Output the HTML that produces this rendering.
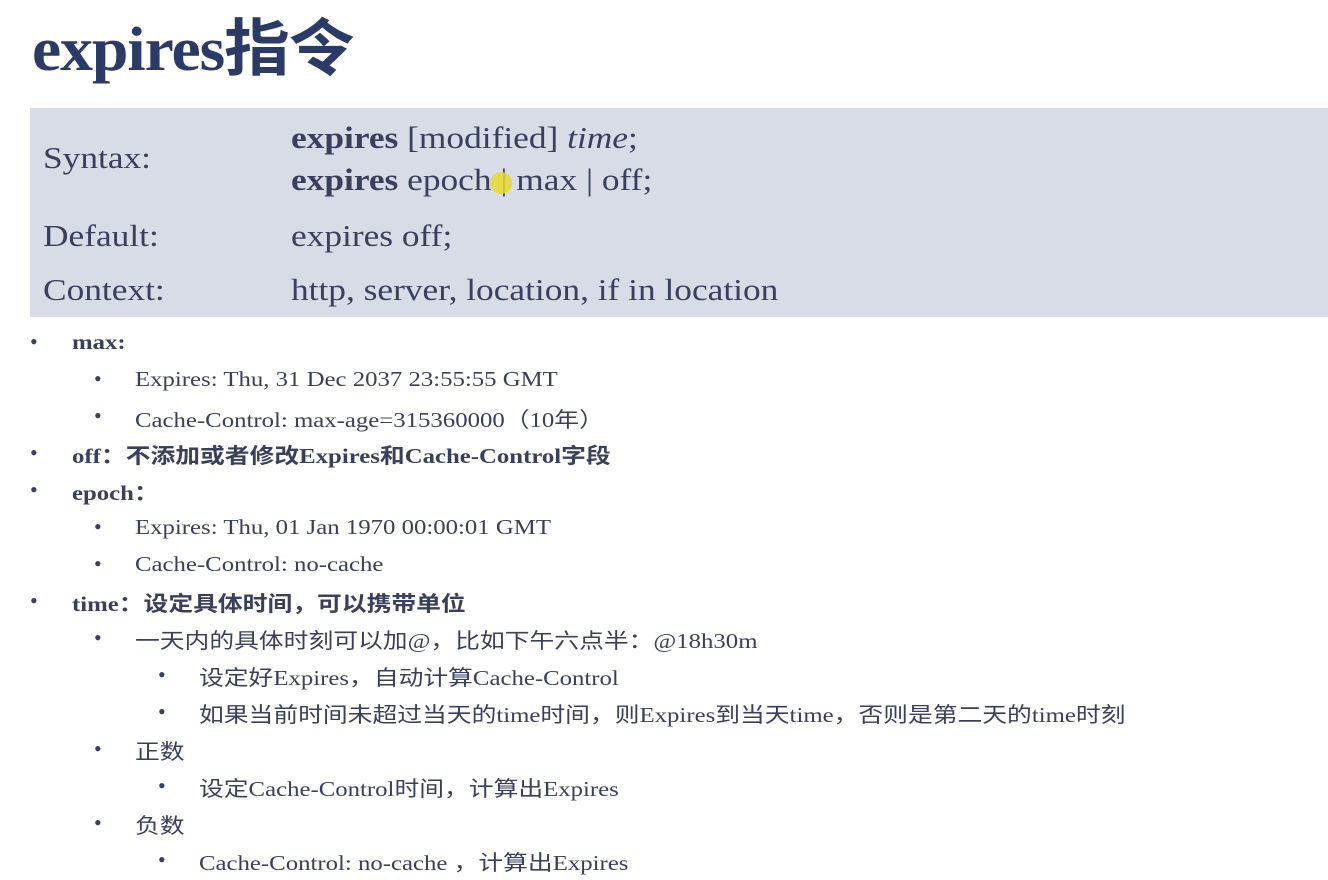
<!DOCTYPE html>
<html><head><meta charset="utf-8"><style>
body{margin:0;width:1328px;height:880px;background:#fff;overflow:hidden;position:relative;font-family:"Liberation Serif","Noto Serif CJK SC",serif;color:#3a3f5c}
.t{position:absolute;white-space:nowrap;transform-origin:0 50%}
h1{position:absolute;left:32px;top:-2px;margin:0;font-size:62px;font-weight:bold;color:#2c3a66;font-family:"Liberation Serif","Noto Sans CJK SC",serif;letter-spacing:-1px;transform:scaleX(1.06);transform-origin:0 50%}
.box{position:absolute;left:30px;top:108px;width:1298px;height:209px;background:#d7dce6}
.lb{font-size:31px;color:#38405e;transform:scaleX(1.14)}
.b{font-weight:bold}
.l{font-size:21px;transform:scaleX(1.18)}
.cj{font-family:"Liberation Serif","Noto Sans CJK SC",sans-serif}
.dot{position:absolute;font-size:22px}
</style></head><body>
<h1>expires指令</h1>
<div class="box"></div>
<div class="t lb" style="left:43px;top:140px">Syntax:</div>
<div class="t lb" style="left:291px;top:120px"><b>expires</b> [modified] <i>time</i>;</div>
<div class="t lb" style="left:291px;top:162px"><b>expires</b> epoch | max | off;</div>
<div class="t lb" style="left:43px;top:218px">Default:</div>
<div class="t lb" style="left:291px;top:218px">expires off;</div>
<div class="t lb" style="left:43px;top:272px">Context:</div>
<div class="t lb" style="left:291px;top:272px">http, server, location, if in location</div>
<div style="position:absolute;left:490px;top:172px;width:22px;height:22px;border-radius:50%;background:#e8d830;opacity:.85"></div>

<div class="dot" style="left:30px;top:329px">•</div><div class="t l b" style="left:72px;top:330px">max:</div>
<div class="dot" style="left:94px;top:366px">•</div><div class="t l" style="left:135px;top:367px">Expires: Thu, 31 Dec 2037 23:55:55 GMT</div>
<div class="dot" style="left:94px;top:403px">•</div><div class="t l cj" style="left:135px;top:404px">Cache-Control: max-age=315360000（10年）</div>
<div class="dot" style="left:30px;top:440px">•</div><div class="t l b cj" style="left:72px;top:440px">off：不添加或者修改Expires和Cache-Control字段</div>
<div class="dot" style="left:30px;top:477px">•</div><div class="t l b cj" style="left:72px;top:477px">epoch：</div>
<div class="dot" style="left:94px;top:514px">•</div><div class="t l" style="left:135px;top:515px">Expires: Thu, 01 Jan 1970 00:00:01 GMT</div>
<div class="dot" style="left:94px;top:551px">•</div><div class="t l" style="left:135px;top:552px">Cache-Control: no-cache</div>
<div class="dot" style="left:30px;top:588px">•</div><div class="t l b cj" style="left:72px;top:588px">time：设定具体时间，可以携带单位</div>
<div class="dot" style="left:94px;top:625px">•</div><div class="t l cj" style="left:135px;top:625px">一天内的具体时刻可以加@，比如下午六点半：@18h30m</div>
<div class="dot" style="left:158px;top:662px">•</div><div class="t l cj" style="left:199px;top:662px">设定好Expires，自动计算Cache-Control</div>
<div class="dot" style="left:158px;top:699px">•</div><div class="t l cj" style="left:199px;top:699px">如果当前时间未超过当天的time时间，则Expires到当天time，否则是第二天的time时刻</div>
<div class="dot" style="left:94px;top:736px">•</div><div class="t l cj" style="left:135px;top:736px">正数</div>
<div class="dot" style="left:158px;top:773px">•</div><div class="t l cj" style="left:199px;top:773px">设定Cache-Control时间，计算出Expires</div>
<div class="dot" style="left:94px;top:810px">•</div><div class="t l cj" style="left:135px;top:810px">负数</div>
<div class="dot" style="left:158px;top:847px">•</div><div class="t l cj" style="left:199px;top:847px">Cache-Control: no-cache ，计算出Expires</div>
</body></html>
